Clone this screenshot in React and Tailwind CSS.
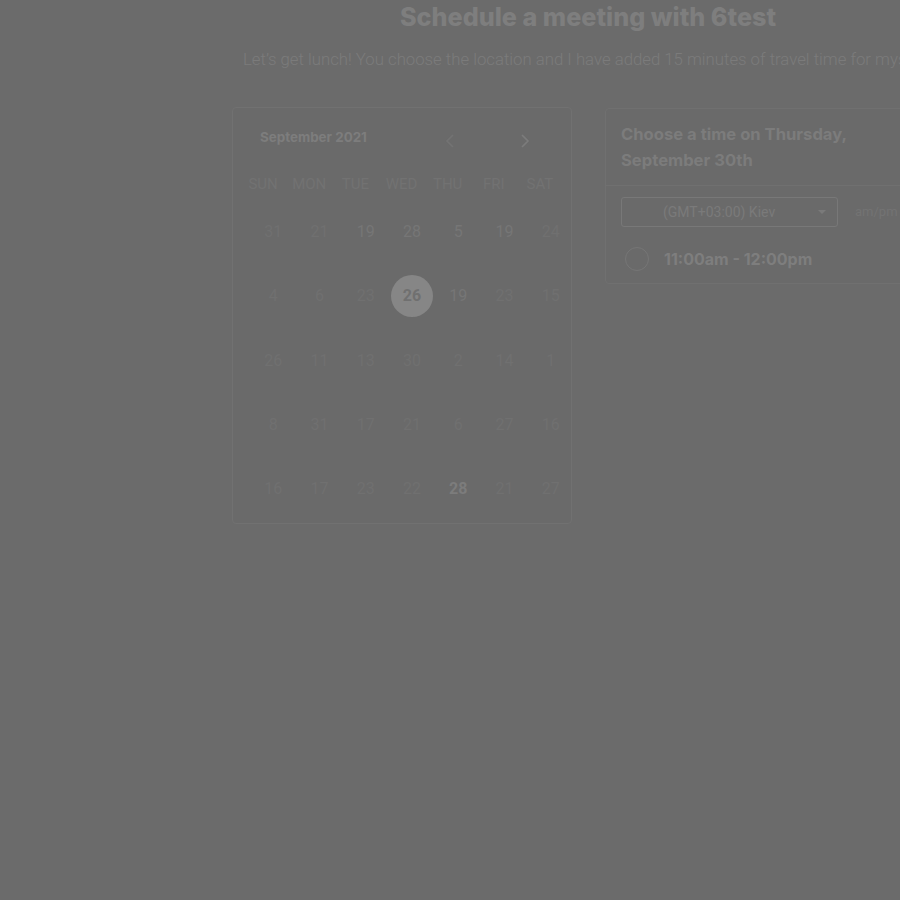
import React from "react";

const weekdays = ["SUN", "MON", "TUE", "WED", "THU", "FRI", "SAT"];

// level: 0 faint, 1 medium, 2 bold bright, 3 selected
const rows = [
  [["31", 0], ["21", 0], ["19", 1], ["28", 1], ["5", 1], ["19", 1], ["24", 0]],
  [["4", 0], ["6", 0], ["23", 0], ["26", 3], ["19", 1], ["23", 0], ["15", 0]],
  [["26", 0], ["11", 0], ["13", 0], ["30", 0], ["2", 0], ["14", 0], ["1", 0]],
  [["8", 0], ["31", 0], ["17", 0], ["21", 0], ["6", 0], ["27", 0], ["16", 0]],
  [["16", 0], ["17", 0], ["23", 0], ["22", 0], ["28", 2], ["21", 0], ["27", 0]],
];

const inter = { fontFamily: "Inter, 'Liberation Sans', sans-serif" };

function Day({ label, level }) {
  if (level === 3) {
    return (
      <div className="flex items-center justify-center">
        <div className="w-[42px] h-[42px] rounded-full bg-[#868686] flex items-center justify-center text-[16px] font-bold text-[#707070]">
          {label}
        </div>
      </div>
    );
  }
  const cls =
    level === 2
      ? "text-[#7c7c7c] font-bold"
      : level === 1
      ? "text-[#767676]"
      : "text-[#707070]";
  return (
    <div className={"flex items-center justify-center text-[16px] " + cls}>
      {label}
    </div>
  );
}

export default function App() {
  return (
    <div
      className="w-[900px] h-[900px] overflow-hidden bg-[#6b6b6b]"
      style={{ fontFamily: "Roboto, 'Liberation Sans', sans-serif" }}
    >
      <div className="ml-[232px] w-[712px]">
        <h1
          className="pt-[1px] text-center text-[25.2px] leading-[32px] font-extrabold text-[#7e7e7e]"
          style={inter}
        >
          Schedule a meeting with 6test
        </h1>
        <p className="mt-[14px] ml-[11px] whitespace-nowrap text-[16.75px] leading-[24px] font-light text-[#7b7b7b]">
          Let’s get lunch! You choose the location and I have added 15 minutes of travel time for myself.
        </p>

        <div className="mt-[36px] flex items-start gap-[33px]">
          {/* Calendar card */}
          <div className="w-[340px] h-[417px] shrink-0 rounded-[4px] border border-[#717171] bg-[#6a6a6a]">
            <div className="mt-[14px] h-[30px] flex items-center">
              <span
                className="ml-[27px] w-[140px] text-[13.4px] font-bold text-[#7d7d7d]"
                style={inter}
              >
                September 2021
              </span>
              <div className="ml-[45px] mt-[8px] flex items-center">
                <svg width="10" height="16" viewBox="0 0 10 16" fill="none">
                  <polyline points="8,2 2,8 8,14" stroke="#737373" strokeWidth="1.6" />
                </svg>
              </div>
              <div className="ml-[65px] mt-[8px] flex items-center">
                <svg width="10" height="16" viewBox="0 0 10 16" fill="none">
                  <polyline points="2,2 8,8 2,14" stroke="#7c7c7c" strokeWidth="1.6" />
                </svg>
              </div>
            </div>

            <div className="mt-[20px] ml-[7px] w-[323px] h-[24px] grid grid-cols-7">
              {weekdays.map((d) => (
                <div
                  key={d}
                  className="flex items-center justify-center text-[15px] text-[#727272]"
                >
                  {d}
                </div>
              ))}
            </div>

            <div className="mt-[4px] ml-[17px] w-[324px]">
              {rows.map((r, i) => (
                <div key={i} className="h-[64.3px] grid grid-cols-7">
                  {r.map(([label, level], j) => (
                    <Day key={j} label={label} level={level} />
                  ))}
                </div>
              ))}
            </div>
          </div>

          {/* Time panel */}
          <div className="mt-[1px] w-[340px] shrink-0 rounded-[4px] border border-[#707070] bg-[#6a6a6a]">
            <div
              className="pt-[12px] pl-[15px] w-[290px] text-[16.6px] leading-[26px] font-bold text-[#7c7c7c]"
              style={inter}
            >
              Choose a time on Thursday,
              <br />
              September 30th
            </div>
            <div className="mt-[12px] border-t border-[#707070]" />
            <div className="mt-[11px] ml-[15px] flex items-center">
              <div className="w-[217px] h-[30px] rounded-[3px] border border-[#787878] flex items-center">
                <span className="pl-[41px] text-[14px] text-[#7a7a7a]">
                  (GMT+03:00) Kiev
                </span>
                <span className="ml-auto mr-[11px] w-0 h-0 border-l-[4px] border-r-[4px] border-t-[4px] border-l-transparent border-r-transparent border-t-[#7a7a7a]" />
              </div>
              <span className="ml-[17px] text-[13px] text-[#737373]">am/pm</span>
            </div>
            <div className="mt-[20px] mb-[12px] ml-[19px] h-[24px] flex items-center">
              <div className="w-[24px] h-[24px] rounded-full border-[1.5px] border-[#767676]" />
              <span
                className="ml-[15px] text-[16px] font-bold text-[#7e7e7e]"
                style={inter}
              >
                11:00am - 12:00pm
              </span>
            </div>
          </div>
        </div>
      </div>
    </div>
  );
}
